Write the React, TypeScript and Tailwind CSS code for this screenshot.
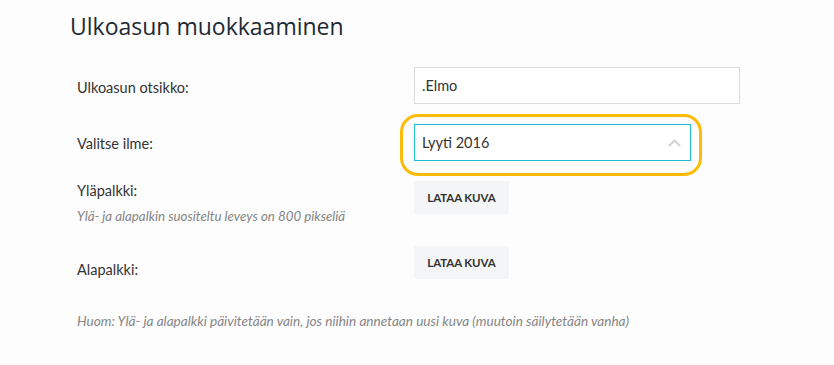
import React from "react";

export default function App() {
  const body = { fontFamily: "Lato, 'Open Sans', sans-serif" };
  return (
    <div className="w-[834px] h-[365px] bg-[#fdfdfd] overflow-hidden" style={body}>
      <div className="pl-[70px] pt-[10px]">
        <h1
          className="text-[23px] leading-[32px] text-[#1e2a33] font-normal"
          style={{ fontFamily: "'Open Sans', sans-serif" }}
        >
          Ulkoasun muokkaaminen
        </h1>
      </div>
      <div className="pl-[77px]">
        {/* Row 1 */}
        <div className="mt-[25px] flex items-center">
          <div className="w-[337px] text-[14.5px] leading-[20px] text-[#333] pt-[5px]">Ulkoasun otsikko:</div>
          <div className="w-[326px] h-[37px] border border-[#dcdcdc] bg-white flex items-center px-[7px] text-[14.5px] text-[#333]">
            .Elmo
          </div>
        </div>
        {/* Row 2 */}
        <div className="mt-[20px] flex items-center">
          <div className="w-[337px] text-[14.5px] leading-[20px] text-[#333] pt-[3px]">Valitse ilme:</div>
          <div className="relative">
            <div className="w-[277px] h-[37px] border border-[#1ebfd6] bg-white flex items-center justify-between pl-[7px] pr-[9px] text-[14.5px] text-[#333]">
              <span>Lyyti 2016</span>
              <svg width="13" height="8" viewBox="0 0 13 8" fill="none">
                <path d="M1 7 L6.5 1.5 L12 7" stroke="#d2d2d2" strokeWidth="2" />
              </svg>
            </div>
            <div className="absolute left-[-14px] right-[-11px] top-[-10px] bottom-[-15px] border-[3px] border-[#fbbb06] rounded-[18px] pointer-events-none" />
          </div>
        </div>
        {/* Row 3 */}
        <div className="mt-[20px] flex items-start">
          <div className="w-[337px]">
            <div className="text-[14.5px] leading-[20px] text-[#333]">Yläpalkki:</div>
            <div className="mt-[6px] text-[13.3px] leading-[18px] italic text-[#858585]">
              Ylä- ja alapalkin suositeltu leveys on 800 pikseliä
            </div>
          </div>
          <button className="w-[95px] h-[33px] bg-[#f4f5f7] rounded-[2px] text-[11.5px] font-bold text-[#333] tracking-[-0.1px]">
            LATAA KUVA
          </button>
        </div>
        {/* Row 4 */}
        <div className="mt-[21px] flex items-start">
          <div className="w-[337px] pt-[14px] text-[14.5px] leading-[20px] text-[#333]">Alapalkki:</div>
          <button className="w-[95px] h-[33px] bg-[#f4f5f7] rounded-[2px] text-[11.5px] font-bold text-[#333] tracking-[-0.1px]">
            LATAA KUVA
          </button>
        </div>
        <div className="mt-[32px] text-[13.6px] leading-[18px] italic text-[#858585]">
          Huom: Ylä- ja alapalkki päivitetään vain, jos niihin annetaan uusi kuva (muutoin säilytetään vanha)
        </div>
      </div>
    </div>
  );
}
